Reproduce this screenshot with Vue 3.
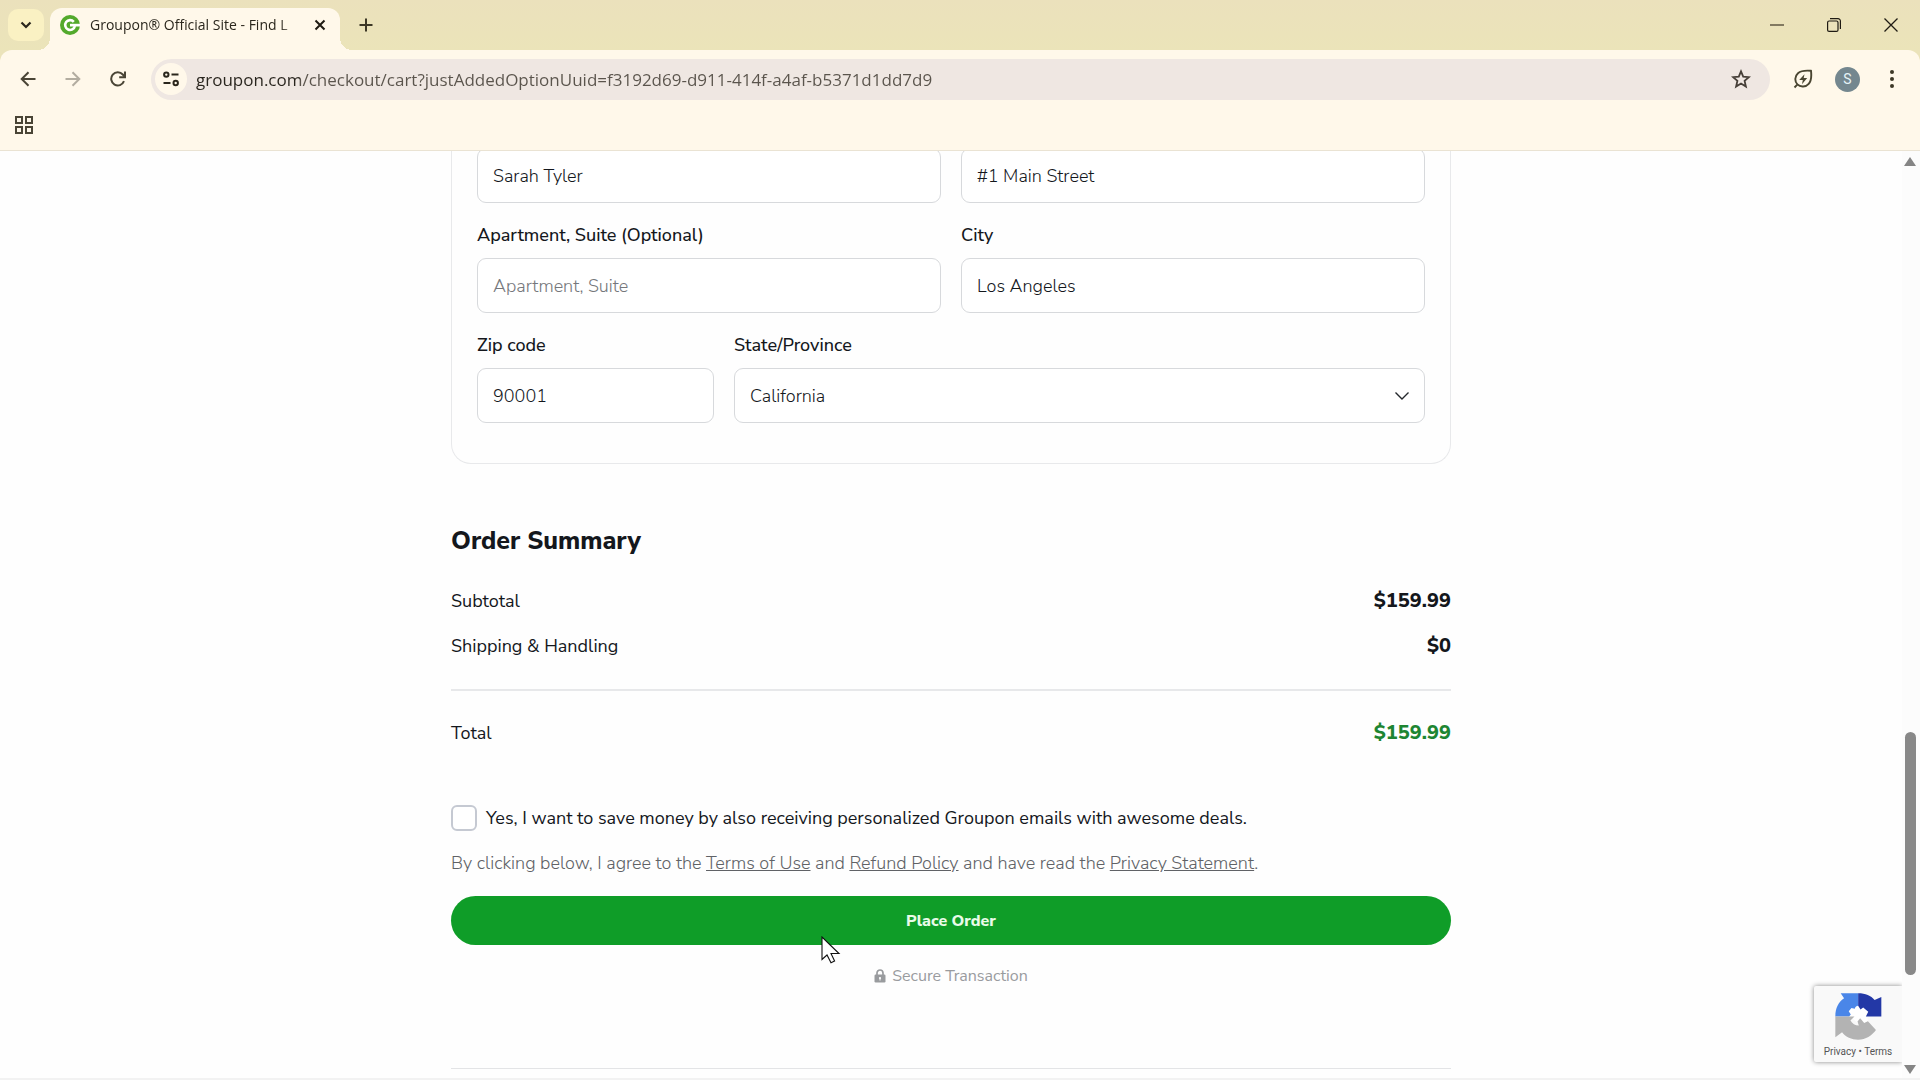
<template>
  <div class="browser">
    <header class="tab-strip">
      <button class="tab-search" aria-label="Search tabs">
        <svg width="14" height="14" viewBox="0 0 14 14" fill="none" stroke="#2a261c" stroke-width="2.2">
          <path d="M2.5 4.5 7 9l4.500-4.500" />
        </svg>
      </button>
      <div class="tab">
        <svg width="20" height="20" viewBox="0 0 20 20">
          <circle cx="10" cy="10" r="10" fill="#53a92c" />
          <path d="M13.800 6.800A4.900 4.900 0 1 0 14.900 11" fill="none" stroke="#fff" stroke-width="2.600" />
          <path d="M10 8.800h10v2.700H10z" fill="#fff" />
        </svg>
        <span class="tab-title">Groupon® Official Site - Find L</span>
        <button class="tab-close" aria-label="Close tab">
          <svg width="12" height="12" viewBox="0 0 12 12" stroke="#1f1b13" stroke-width="2">
            <path d="M1.500 1.500l9 9M10.500 1.500l-9 9" />
          </svg>
        </button>
      </div>
      <button class="new-tab" aria-label="New tab">
        <svg width="14" height="14" viewBox="0 0 14 14" stroke="#3d3826" stroke-width="2">
          <path d="M7 .5v13M.5 7h13" />
        </svg>
      </button>
      <div class="window-buttons">
        <button aria-label="Minimize">
          <svg width="14" height="14" viewBox="0 0 14 14" stroke="#4a4130" stroke-width="1.300">
            <path d="M0 7h14" />
          </svg>
        </button>
        <button aria-label="Restore">
          <svg width="14" height="14" viewBox="0 0 14 14" fill="none" stroke="#1f1b13" stroke-width="1.200">
            <rect x=".6" y="3" width="10.400" height="10.400" rx="1.500" />
            <path d="M3 .7h8a2.400 2.400 0 0 1 2.400 2.400v7.900" />
          </svg>
        </button>
        <button aria-label="Close">
          <svg width="14" height="14" viewBox="0 0 14 14" stroke="#1f1b13" stroke-width="1.300">
            <path d="M.5.5l13 13M13.500.5l-13 13" />
          </svg>
        </button>
      </div>
    </header>

    <div class="toolbar">
      <button class="nav" aria-label="Back">
        <svg width="16" height="16" viewBox="0 0 16 16" fill="none" stroke="#4a4536" stroke-width="2">
          <path d="M15.500 8H2M8.500 1.200 1.700 8l6.800 6.800" />
        </svg>
      </button>
      <button class="nav" aria-label="Forward">
        <svg width="16" height="16" viewBox="0 0 16 16" fill="none" stroke="#b3ada0" stroke-width="2">
          <path d="M.5 8H14M7.500 1.200 14.300 8l-6.800 6.800" />
        </svg>
      </button>
      <button class="nav" aria-label="Reload">
        <svg width="16" height="16" viewBox="0 0 16 16" fill="none" stroke="#4a4536" stroke-width="2">
          <path d="M14 10.200A6.600 6.600 0 1 1 12.800 3.500L14.500 5.600" />
          <path d="M15 .5v5.800H9.200" />
        </svg>
      </button>
      <div class="omnibox">
        <button class="site-info" aria-label="View site information">
          <svg width="16" height="16" viewBox="0 0 16 16" fill="none" stroke="#2a261c" stroke-width="2">
            <circle cx="3.300" cy="3.600" r="2.200" />
            <path d="M8.500 3.600H15.500M.5 12h7" />
            <circle cx="12.700" cy="12" r="2.200" />
          </svg>
        </button>
        <input v-model="url" class="url" type="text" aria-label="Address" />
        <button class="bookmark" aria-label="Bookmark this tab">
          <svg width="20" height="20" viewBox="0 0 20 20" fill="none" stroke="#463f38" stroke-width="1.800">
            <path d="M10 2.400l2.200 5.300 5.700.5-4.300 3.700 1.300 5.600L10 14.500l-4.900 3 1.300-5.600-4.300-3.700 5.700-.5z" />
          </svg>
        </button>
      </div>
      <button class="nav saver" aria-label="Energy saver">
        <svg width="20" height="20" viewBox="0 0 20 20" fill="none" stroke="#4a4632" stroke-width="1.900">
          <path d="M1.500 18.500 4 15.800M18 1.800c.6 5 .7 9.500-2.300 13-2.900 3.300-8.300 3.600-11.300.6s-2.700-8.300.6-11.200C8.300 1.400 13 1.300 18 1.800z" />
          <path d="M11.500 5.200 6.200 11h3.600l-.8 4.200L14.200 9h-3.500z" fill="#4a4632" stroke="none" />
        </svg>
      </button>
      <button class="avatar">S</button>
      <button class="nav menu" aria-label="Menu">
        <svg width="4" height="18" viewBox="0 0 4 18" fill="#3d3826">
          <circle cx="2" cy="2" r="2" />
          <circle cx="2" cy="9" r="2" />
          <circle cx="2" cy="16" r="2" />
        </svg>
      </button>
    </div>

    <div class="bookmarks">
      <button aria-label="Apps">
        <svg width="18" height="18" viewBox="0 0 18 18" fill="none" stroke="#4a4536" stroke-width="2">
          <path d="M1 1h6v6H1zM11 1h6v6h-6zM1 11h6v6H1zM11 11h6v6h-6z" />
        </svg>
      </button>
    </div>

    <div class="viewport">
      <main class="page">
        <form class="checkout" @submit.prevent>
          <section class="card">
            <div class="row">
              <div class="field">
                <input v-model="form.name" type="text" aria-label="Full name" />
              </div>
              <div class="field">
                <input v-model="form.address" type="text" aria-label="Address" />
              </div>
            </div>
            <div class="row">
              <div class="field">
                <label for="apartment">Apartment, Suite (Optional)</label>
                <input id="apartment" v-model="form.apartment" type="text" placeholder="Apartment, Suite" />
              </div>
              <div class="field">
                <label for="city">City</label>
                <input id="city" v-model="form.city" type="text" />
              </div>
            </div>
            <div class="row">
              <div class="field zip">
                <label for="zip">Zip code</label>
                <input id="zip" v-model="form.zip" type="text" />
              </div>
              <div class="field">
                <label for="state">State/Province</label>
                <div class="select-wrap">
                  <select id="state" v-model="form.state">
                    <option>California</option>
                  </select>
                  <svg class="chevron" width="16" height="16" viewBox="0 0 16 16" fill="none" stroke="#25282c" stroke-width="1.400">
                    <path d="M1.500 4.500 8 11l6.500-6.500" />
                  </svg>
                </div>
              </div>
            </div>
          </section>

          <section class="summary">
            <h2>Order Summary</h2>
            <div v-for="line in lines" :key="line.label" class="line">
              <span>{{ line.label }}</span>
              <strong>{{ line.amount }}</strong>
            </div>
            <div class="line total">
              <span>Total</span>
              <strong>$159.99</strong>
            </div>
          </section>

          <label class="opt-in">
            <input v-model="optIn" type="checkbox" />
            <span>Yes, I want to save money by also receiving personalized Groupon emails with awesome deals.</span>
          </label>
          <p class="terms">
            By clicking below, I agree to the <a href="#">Terms of Use</a> and <a href="#">Refund Policy</a> and have read the <a href="#">Privacy Statement</a>.
          </p>
          <button class="place-order" type="submit">Place Order</button>
          <div class="secure">
            <svg width="12" height="14" viewBox="0 0 12 14">
              <path d="M3 6V4a3 3 0 0 1 6 0v2" fill="none" stroke="#999b9e" stroke-width="1.700" />
              <rect x=".5" y="5.500" width="11" height="8" rx="1.200" fill="#999b9e" />
              <circle cx="6" cy="9" r="1.100" fill="#fff" />
              <path d="M5.500 9h1v2.500h-1z" fill="#fff" />
            </svg>
            Secure Transaction
          </div>
        </form>
        <hr class="footer-line" />

        <aside class="recaptcha">
          <svg width="47" height="47" viewBox="20 20 140 140">
            <path d="M60 66l14-10 15 2 17 5 14 13-4 14 2 14-24 12-28-26-6-8z" fill="#fff" />
            <path d="M37 21h52v37c-6 0-9 4-10 9l-10-2-8 9 6 10-5 6H21c0-25 9-42 26-54z" fill="#4a86e8" />
            <path d="M89 21c22 0 38 7 49 20l20-9v58h-46l7-14-15-13-8 6-7-11z" fill="#2338a6" />
            <path d="M21 90h57l-12 12c5 9 14 15 25 15l-4-12 8-10 12 14 11-5 24 26c-12 16-30 29-53 29-20 0-37-8-48-22l-20 15z" fill="#b3b3b3" />
          </svg>
          <nav><a href="#">Privacy</a> <span>•</span> <a href="#">Terms</a></nav>
        </aside>

        <svg class="pointer" width="20" height="28" viewBox="0 0 20 28">
          <path d="M1 1v22.500l5-4.500 4 7.800 3.600-1.800-3.600-7.500h8z" fill="#fff" stroke="#111" stroke-width="1.100" />
        </svg>
      </main>

      <div class="scrollbar">
        <svg width="12" height="9" viewBox="0 0 12 9"><path d="M6 0l6 9H0z" fill="#858585" /></svg>
        <div class="track">
          <div class="thumb" :style="{ top: thumb.top + '%', height: thumb.height + '%' }"></div>
        </div>
        <svg width="12" height="9" viewBox="0 0 12 9"><path d="M6 9L0 0h12z" fill="#858585" /></svg>
      </div>
    </div>
  </div>
</template>

<script setup>
import { ref, reactive } from 'vue'

const url = ref('groupon.com/checkout/cart?justAddedOptionUuid=f3192d69-d911-414f-a4af-b5371d1dd7d9')

const form = reactive({
  name: 'Sarah Tyler',
  address: '#1 Main Street',
  apartment: '',
  city: 'Los Angeles',
  zip: '90001',
  state: 'California',
})

const lines = [
  { label: 'Subtotal', amount: '$159.99' },
  { label: 'Shipping & Handling', amount: '$0' },
]

const optIn = ref(false)
const thumb = { top: 63, height: 27 }
</script>

<style>
body {
  margin: 0;
  background: #fefefe;
}
</style>

<style scoped>
.browser {
  display: flex;
  flex-direction: column;
  height: 100vh;
  overflow: hidden;
  background: #ebe3ba;
  color: #14171c;
  font-family: 'Nunito Sans', Nunito, Lato, sans-serif;
}

button {
  display: flex;
  align-items: center;
  justify-content: center;
  padding: 0;
  border: none;
  background: none;
  font-family: inherit;
  cursor: pointer;
}

svg { display: block; flex: none; }

.tab-strip {
  display: flex;
  align-items: center;
  height: 50px;
  flex: none;
  padding-left: 8px;
  background: linear-gradient(#ebe1bc, #ebe4b9);
  font-family: 'Segoe UI', 'Open Sans', sans-serif;
}

.tab-search {
  width: 36px;
  height: 32px;
  border-radius: 10px;
  background: #faf1c3;
}

.tab {
  position: relative;
  display: flex;
  align-items: center;
  align-self: flex-end;
  gap: 10px;
  width: 290px;
  height: 42px;
  margin-left: 6px;
  padding: 0 11px 8px 10px;
  border-radius: 12px 12px 0 0;
  background: #fff8ea;
  box-sizing: border-box;
}

.tab::before,
.tab::after {
  content: '';
  position: absolute;
  bottom: 0;
  width: 12px;
  height: 12px;
}

.tab::before {
  left: -12px;
  background: radial-gradient(circle at 0 0, transparent 12px, #fff8ea 12px);
}

.tab::after {
  right: -12px;
  background: radial-gradient(circle at 100% 0, transparent 12px, #fff8ea 12px);
}

.tab-title {
  flex: 1;
  min-width: 0;
  overflow: hidden;
  white-space: nowrap;
  font-size: 14px;
  line-height: 20px;
  color: #2a261c;
  mask-image: linear-gradient(to right, #000 90%, transparent);
}

.tab-close { width: 18px; height: 20px; }

.new-tab {
  width: 32px;
  height: 32px;
  margin-left: 10px;
}

.window-buttons {
  display: flex;
  margin-left: auto;
  padding-right: 1px;
}

.window-buttons button { width: 57px; height: 48px; }

.toolbar {
  display: flex;
  align-items: center;
  flex: none;
  height: 58px;
  padding: 0 13px 0 12px;
  border-radius: 12px 12px 0 0;
  background: #fff8ea;
}

.nav {
  width: 32px;
  height: 32px;
  margin-right: 13px;
}

.omnibox {
  display: flex;
  align-items: center;
  flex: 1;
  min-width: 0;
  height: 41px;
  margin-left: 4px;
  padding: 0 19px 0 4px;
  border-radius: 21px;
  background: #efe7e2;
  box-sizing: border-box;
}

.site-info {
  width: 32px;
  height: 32px;
  border-radius: 50%;
  background: #fff8ea;
}

.url {
  flex: 1;
  min-width: 0;
  height: 32px;
  margin-left: 9px;
  padding: 0;
  border: none;
  outline: none;
  font-family: 'Segoe UI', 'Open Sans', sans-serif;
  font-size: 17px;
  color: transparent;
  background: linear-gradient(to right, #28241d 104px, #5a544c 104px);
  background-clip: text;
}

.saver { margin: 0 16px 0 17px; }

.avatar {
  width: 25px;
  height: 25px;
  border-radius: 50%;
  background: #74878f;
  color: #e6f3f7;
  font-family: Roboto, sans-serif;
  font-size: 14px;
}

.menu { width: 30px; margin: 0 0 0 17px; }

.bookmarks {
  display: flex;
  align-items: center;
  flex: none;
  height: 43px;
  padding: 0 15px 8px;
  border-bottom: 1px solid #eae3d3;
  background: #fff8ea;
  box-sizing: border-box;
}

.viewport {
  position: relative;
  display: flex;
  flex: 1;
  min-height: 0;
  border-bottom: 2px solid #f2f2f2;
  background: #fefefe;
}

.page {
  flex: 1;
  min-width: 0;
  overflow: hidden;
}

/* the form is scrolled slightly under the toolbar */
.checkout {
  max-width: 1000px;
  margin: -3px auto 0;
  font-size: 18px;
  line-height: 24px;
}

.card {
  display: flex;
  flex-direction: column;
  gap: 20px;
  padding: 0 25px 40px;
  border: 1px solid #e8e9eb;
  border-top: none;
  border-radius: 0 0 20px 20px;
}

.row { display: flex; gap: 20px; }

.field {
  display: flex;
  flex-direction: column;
  flex: 1;
  gap: 11px;
}

.zip { flex: 0 0 25%; }

.field label { font-weight: 500; }

.field input,
.field select {
  width: 100%;
  height: 55px;
  padding: 0 15px;
  border: 1px solid #d7d9dc;
  border-radius: 9px;
  background: #fff;
  color: #14171c;
  font-family: inherit;
  font-size: 18px;
  font-weight: 300;
  outline: none;
  appearance: none;
  box-sizing: border-box;
}

.field input::placeholder { color: #75777b; }

.select-wrap { position: relative; }

.chevron {
  position: absolute;
  top: 20px;
  right: 15px;
  pointer-events: none;
}

.summary h2 {
  margin: 61px 0 32px;
  font-size: 25px;
  line-height: 32px;
  font-weight: 800;
}

.line {
  display: flex;
  justify-content: space-between;
  margin-bottom: 21px;
}

.line strong { font-size: 20px; font-weight: 800; }

.total {
  margin: 31px 0 0;
  padding-top: 30px;
  border-top: 2px solid #e7e8ea;
}

.total strong { color: #1d8532; }

.opt-in {
  display: flex;
  align-items: center;
  gap: 9px;
  margin-top: 60px;
}

.opt-in input {
  flex: none;
  width: 26px;
  height: 26px;
  margin: 0;
  border: 2px solid #c5c9d2;
  border-radius: 6px;
  background: #fff;
  appearance: none;
}

.terms { margin: 20px 0 21px; color: #606266; font-weight: 300; }
.terms a { color: inherit; }

.place-order {
  width: 100%;
  height: 49px;
  border-radius: 25px;
  background: #0f9d28;
  color: #e9fbe9;
  font-size: 16px;
  font-weight: 800;
}

.secure {
  display: flex;
  align-items: center;
  justify-content: center;
  gap: 6px;
  margin-top: 19px;
  font-size: 16px;
  color: #999b9e;
}

.footer-line {
  max-width: 1000px;
  margin: 80px auto 0;
  border: none;
  border-top: 1px solid #e3e4e6;
}

.recaptcha {
  position: absolute;
  right: 18px;
  bottom: 16px;
  display: flex;
  flex-direction: column;
  align-items: center;
  gap: 4px;
  width: 88px;
  height: 76px;
  padding-top: 7px;
  border-radius: 2px 0 0 2px;
  background: #f9f9f9;
  box-shadow: 0 0 5px #888;
  clip-path: inset(-8px 0 -8px -8px);
  box-sizing: border-box;
}

.recaptcha nav {
  font-family: Roboto, sans-serif;
  font-size: 10px;
  line-height: 16px;
  color: #555;
}

.recaptcha a { color: inherit; text-decoration: none; }

.pointer {
  position: absolute;
  left: 821px;
  top: 785px;
}

.scrollbar {
  display: flex;
  flex-direction: column;
  align-items: center;
  flex: none;
  width: 18px;
  padding: 6px 2px 4px 0;
  background: #fcfcfc;
  box-sizing: border-box;
}

.track { position: relative; flex: 1; width: 11px; }

.thumb {
  position: absolute;
  width: 100%;
  border-radius: 6px;
  background: #888;
}
</style>
